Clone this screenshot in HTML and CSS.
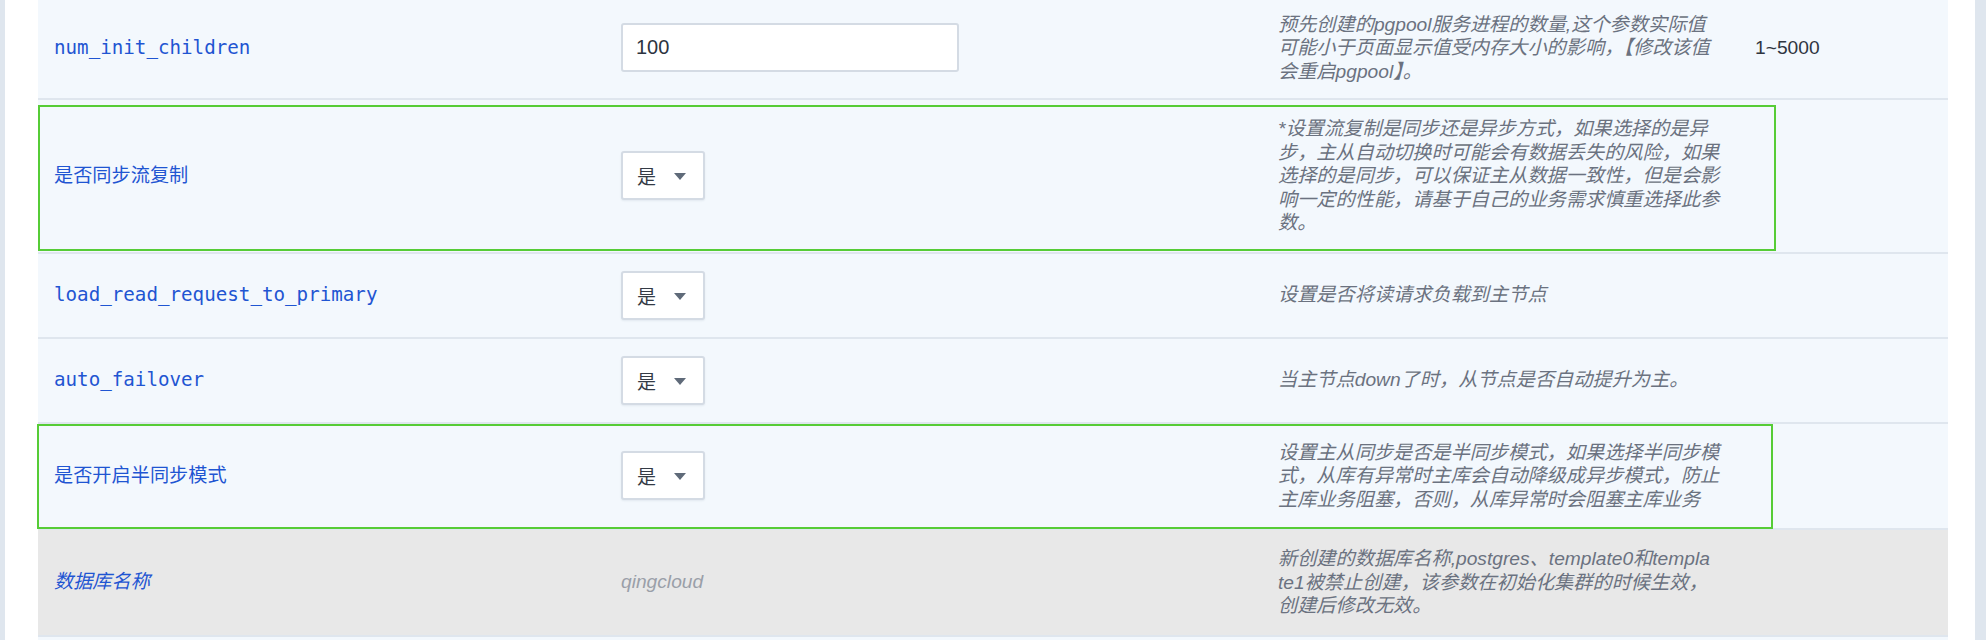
FILE: index.html
```html
<!DOCTYPE html>
<html lang="zh-CN">
<head>
<meta charset="utf-8">
<title>参数配置</title>
<link rel="stylesheet" href="styles.css">
</head>
<body>
<div class="panel">
  <div class="list">
    <div class="row row--cut">
      <div class="label mono">num_init_children</div>
      <div class="ctrl"><div class="input">100</div></div>
      <div class="desc">预先创建的pgpool服务进程的数量,这个参数实际值<br>可能小于页面显示值受内存大小的影响，【修改该值<br>会重启pgpool】。</div>
      <div class="range">1~5000</div>
    </div>
    <div class="row">
      <div class="label mono">是否同步流复制</div>
      <div class="ctrl"><div class="select"><span class="sel-val">是</span><span class="caret"></span></div></div>
      <div class="desc">*设置流复制是同步还是异步方式，如果选择的是异<br>步，主从自动切换时可能会有数据丢失的风险，如果<br>选择的是同步，可以保证主从数据一致性，但是会影<br>响一定的性能，请基于自己的业务需求慎重选择此参<br>数。</div>
      <div class="range"></div>
      <div class="mark mark--a"></div>
    </div>
    <div class="row">
      <div class="label mono">load_read_request_to_primary</div>
      <div class="ctrl"><div class="select"><span class="sel-val">是</span><span class="caret"></span></div></div>
      <div class="desc">设置是否将读请求负载到主节点</div>
      <div class="range"></div>
    </div>
    <div class="row">
      <div class="label mono">auto_failover</div>
      <div class="ctrl"><div class="select"><span class="sel-val">是</span><span class="caret"></span></div></div>
      <div class="desc">当主节点down了时，从节点是否自动提升为主。</div>
      <div class="range"></div>
    </div>
    <div class="row">
      <div class="label mono">是否开启半同步模式</div>
      <div class="ctrl"><div class="select"><span class="sel-val">是</span><span class="caret"></span></div></div>
      <div class="desc">设置主从同步是否是半同步模式，如果选择半同步模<br>式，从库有异常时主库会自动降级成异步模式，防止<br>主库业务阻塞，否则，从库异常时会阻塞主库业务</div>
      <div class="range"></div>
      <div class="mark mark--b"></div>
    </div>
    <div class="row row--disabled">
      <div class="label label--italic">数据库名称</div>
      <div class="ctrl"><span class="static">qingcloud</span></div>
      <div class="desc">新创建的数据库名称,postgres、template0和templa<br>te1被禁止创建，该参数在初始化集群的时候生效，<br>创建后修改无效。</div>
      <div class="range"></div>
    </div>
    <div class="row row--empty"></div>
  </div>
</div>
</body>
</html>
```

FILE: styles.css
```css
html, body {
  margin: 0;
  padding: 0;
}
body {
  width: 1986px;
  height: 640px;
  overflow: hidden;
  background: #dfe6ee;
  font-family: "Liberation Sans", "Noto Sans CJK SC", sans-serif;
  font-size: 19.2px;
}
.panel {
  margin: 0 11px 0 5px;
  height: 640px;
  background: #ffffff;
  padding: 0 27px 0 33px;
}
.list {
  display: flex;
  flex-direction: column;
}
.row {
  position: relative;
  display: grid;
  grid-template-columns: 567px 657px 477px 1fr;
  align-items: center;
  padding: 17px 0 17px 16px;
  background: #f3f8fd;
  border-bottom: 2px solid #dfe6ee;
}
.row--cut {
  padding-top: 12.5px;
  padding-bottom: 15px;
}
.row--disabled {
  background: #e8e8e8;
}
.row--empty {
  height: 80px;
  padding: 0;
}
.label {
  color: #1f55d2;
  font-size: 19.2px;
  line-height: 24px;
  white-space: nowrap;
}
.mono {
  font-family: "DejaVu Sans Mono", "Noto Sans CJK SC", monospace;
}
.label--italic {
  font-family: "Liberation Sans", "Noto Sans CJK SC", sans-serif;
  font-style: italic;
}
.ctrl {
  display: flex;
  align-items: center;
  min-height: 48px;
}
.input {
  box-sizing: border-box;
  width: 338px;
  height: 49px;
  display: flex;
  align-items: center;
  padding-left: 13px;
  background: #ffffff;
  border: 2px solid #d4dbe4;
  border-radius: 3px;
  color: #2d3440;
  font-size: 20px;
}
.select {
  box-sizing: border-box;
  width: 84px;
  height: 49px;
  display: flex;
  align-items: center;
  padding-left: 14px;
  gap: 18px;
  background: #ffffff;
  border: 2px solid #d4dbe4;
  border-radius: 3px;
  box-shadow: 0 1px 2px rgba(40, 60, 90, 0.08);
}
.sel-val {
  font-family: "Noto Sans CJK SC", sans-serif;
  color: #343b46;
  font-size: 19px;
  line-height: 1;
}
.caret {
  width: 0;
  height: 0;
  border-left: 6.5px solid transparent;
  border-right: 6.5px solid transparent;
  border-top: 7px solid #5f6a79;
  margin-top: 2px;
}
.static {
  color: #9a9fa8;
  font-style: italic;
}
.desc {
  color: #6b7280;
  font-style: italic;
  line-height: 23.5px;
  white-space: nowrap;
}
.range {
  color: #2f3540;
  font-size: 19.2px;
}
.mark {
  position: absolute;
  border: 2px solid #56cc36;
  pointer-events: none;
}
.mark--a {
  top: 5px;
  bottom: 1px;
  left: 0;
  width: 1734px;
}
.mark--b {
  top: 0;
  bottom: -1px;
  left: -1px;
  width: 1732px;
}
```
